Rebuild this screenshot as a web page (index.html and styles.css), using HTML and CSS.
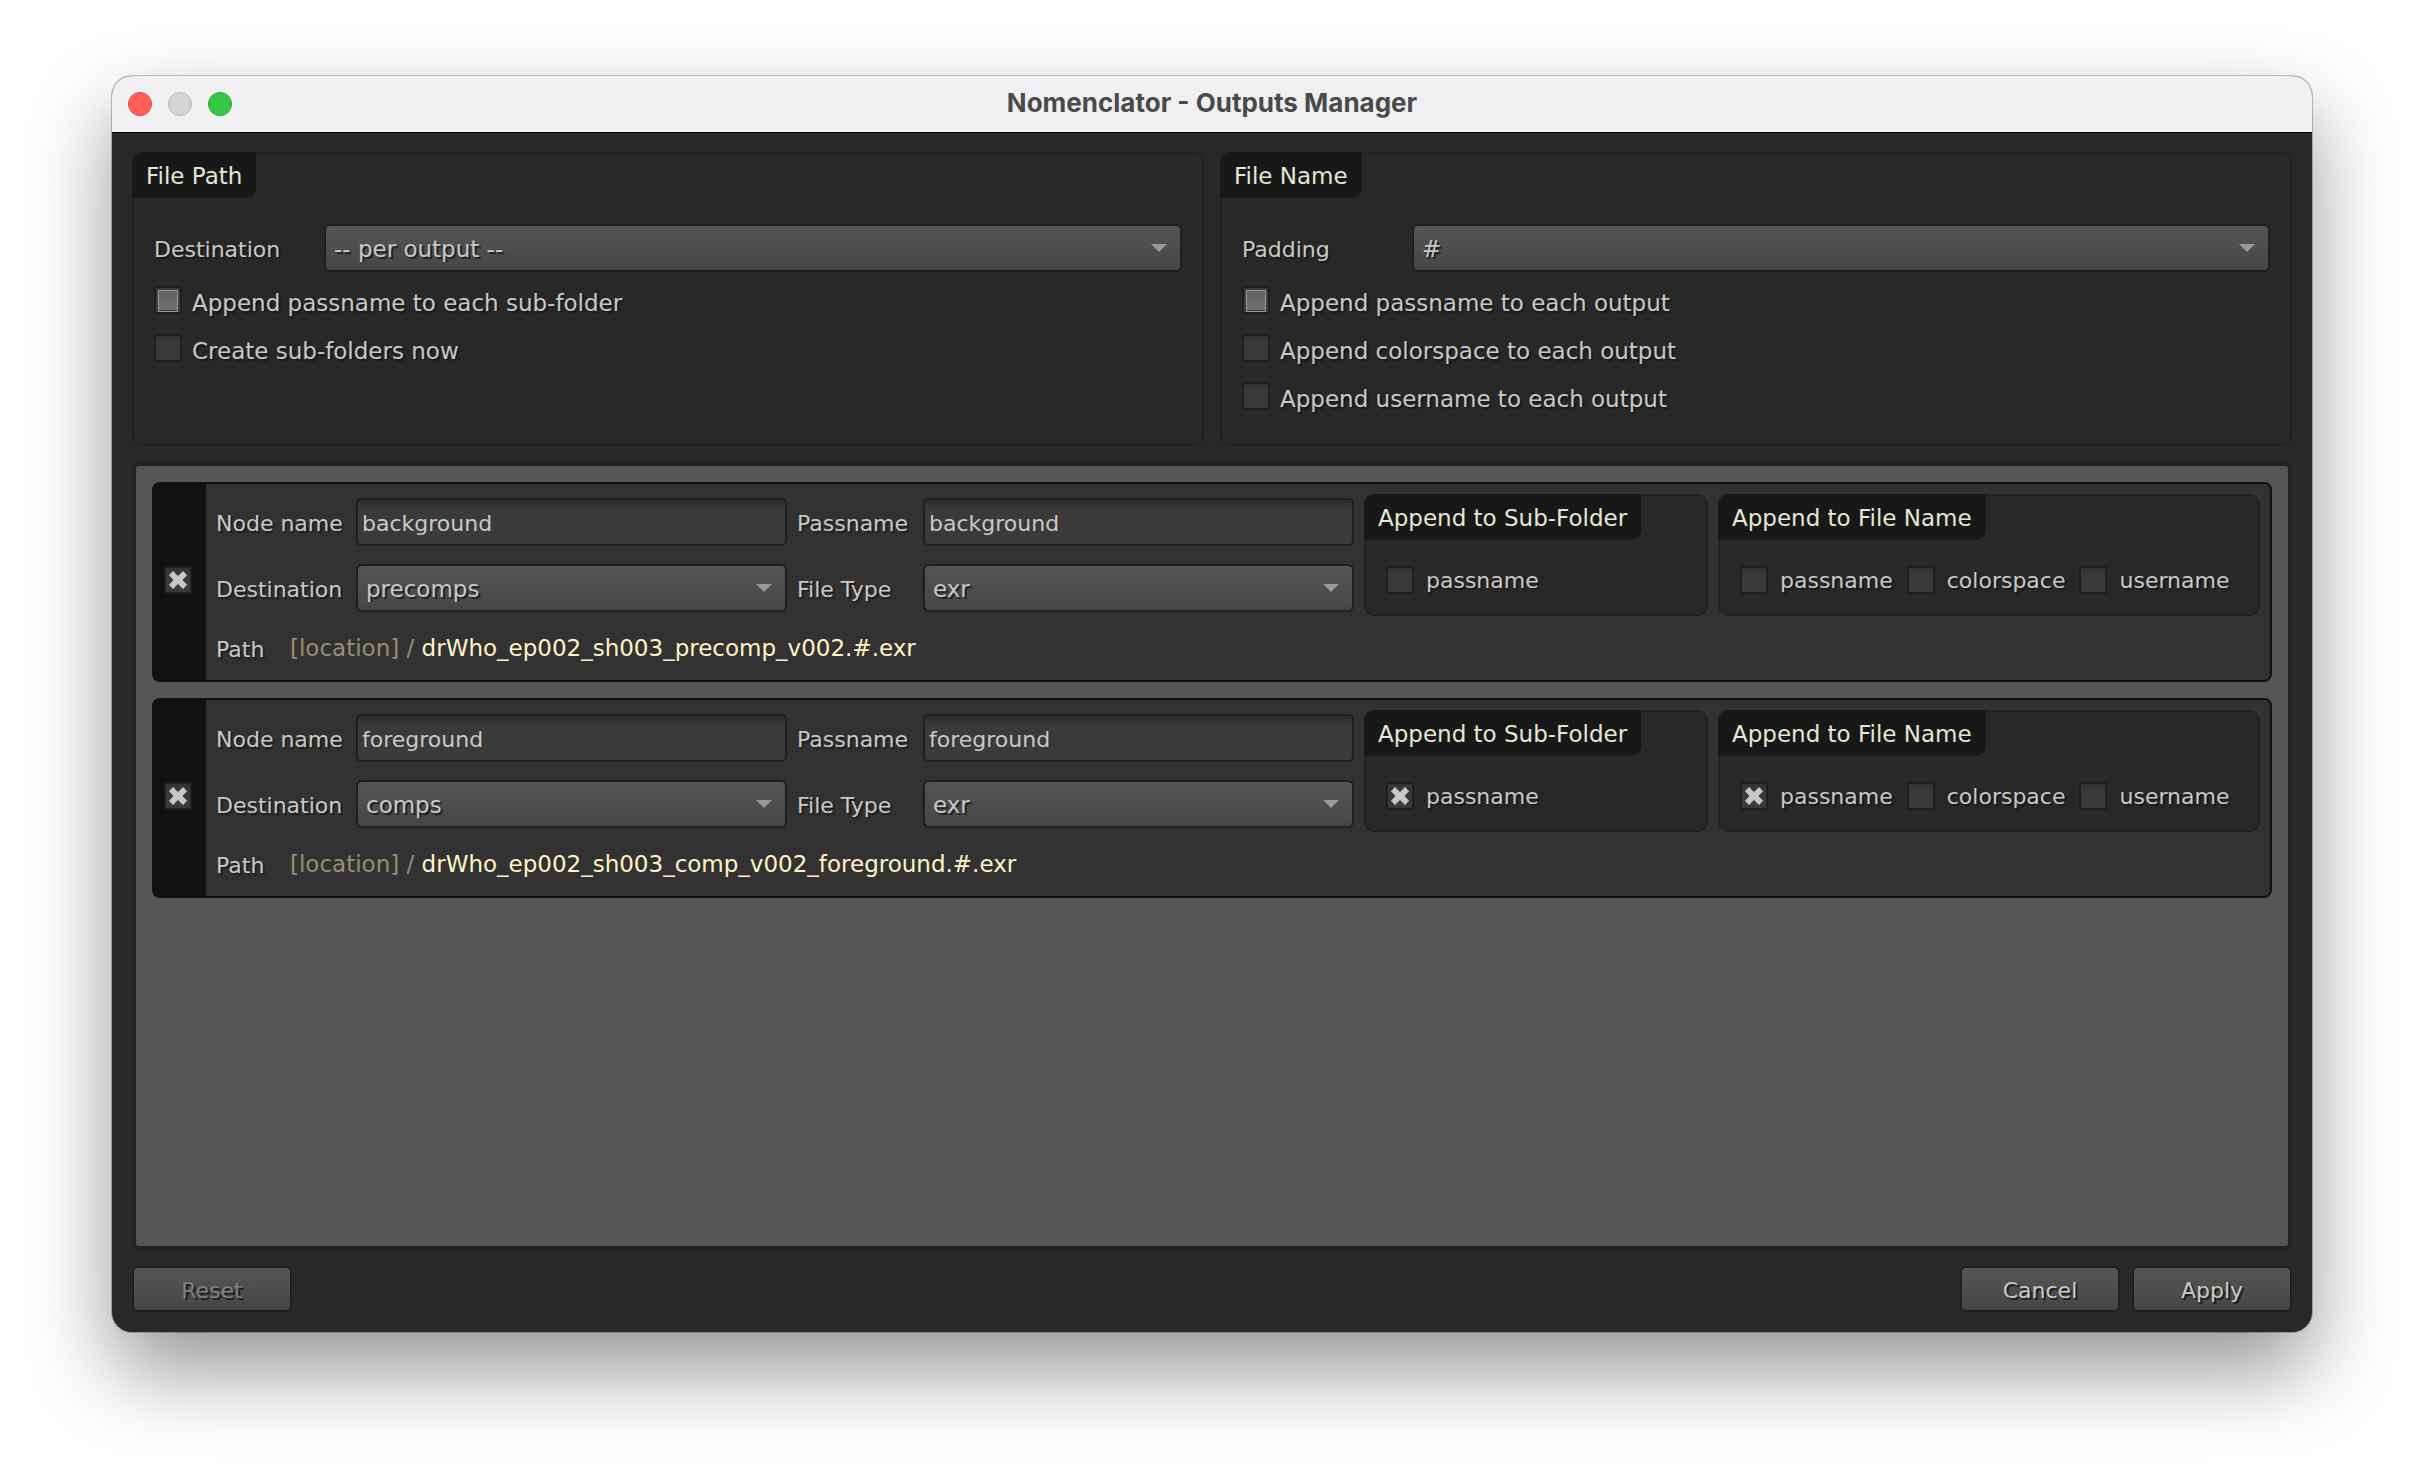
FILE: index.html
```html
<!DOCTYPE html>
<html lang="en">
<head>
<meta charset="utf-8">
<title>Nomenclator - Outputs Manager</title>
<link rel="stylesheet" href="styles.css">
</head>
<body>
<svg class="defs" aria-hidden="true">
  <symbol id="cross" viewBox="0 0 24 24">
    <path d="M7 3.5 L12 8.6 L17 3.5 L20.5 7.2 L15.9 12 L20.5 16.8 L17 20.5 L12 15.4 L7 20.5 L3.5 16.8 L8.1 12 L3.5 7.2 Z"/>
  </symbol>
</svg>
<main class="window">
  <header class="titlebar">
    <div class="lights">
      <button class="light light-close" type="button" aria-label="Close"></button>
      <button class="light light-minimize" type="button" aria-label="Minimize" disabled></button>
      <button class="light light-zoom" type="button" aria-label="Zoom"></button>
    </div>
    <h1 class="title">Nomenclator - Outputs Manager</h1>
  </header>

  <form class="content">
    <div class="settings">
      <section class="group">
        <h2 class="tab">File Path</h2>
        <div class="settings-body">
          <div class="field">
            <label for="destination">Destination</label>
            <div class="select"><select id="destination"><option>-- per output --</option></select></div>
          </div>
          <label class="option"><span class="check"><input type="checkbox" class="partial"></span>Append passname to each sub-folder</label>
          <label class="option"><span class="check"><input type="checkbox"></span>Create sub-folders now</label>
        </div>
      </section>
      <section class="group">
        <h2 class="tab">File Name</h2>
        <div class="settings-body">
          <div class="field">
            <label for="padding">Padding</label>
            <div class="select"><select id="padding"><option>#</option></select></div>
          </div>
          <label class="option"><span class="check"><input type="checkbox" class="partial"></span>Append passname to each output</label>
          <label class="option"><span class="check"><input type="checkbox"></span>Append colorspace to each output</label>
          <label class="option"><span class="check"><input type="checkbox"></span>Append username to each output</label>
        </div>
      </section>
    </div>

    <div class="outputs">
      <article class="card">
        <div class="handle"><span class="check"><input type="checkbox" aria-label="Enable background" checked><svg><use href="#cross"/></svg></span></div>
        <div class="card-body">
          <div class="card-main">
            <div class="fields">
              <label for="node1">Node name</label>
              <input class="text" id="node1" type="text" value="background">
              <label for="pass1">Passname</label>
              <input class="text" id="pass1" type="text" value="background">
              <label for="dest1">Destination</label>
              <div class="select"><select id="dest1"><option>precomps</option></select></div>
              <label for="type1">File Type</label>
              <div class="select"><select id="type1"><option>exr</option></select></div>
            </div>
            <section class="group group-folder">
              <h2 class="tab">Append to Sub-Folder</h2>
              <div class="checks">
                <label class="choice"><span class="check"><input type="checkbox"></span>passname</label>
              </div>
            </section>
            <section class="group group-file">
              <h2 class="tab">Append to File Name</h2>
              <div class="checks">
                <label class="choice"><span class="check"><input type="checkbox"></span>passname</label>
                <label class="choice"><span class="check"><input type="checkbox"></span>colorspace</label>
                <label class="choice"><span class="check"><input type="checkbox"></span>username</label>
              </div>
            </section>
          </div>
          <div class="path">
            <span class="path-label">Path</span>
            <output class="path-value"><span class="location">[location] / </span>drWho_ep002_sh003_precomp_v002.#.exr</output>
          </div>
        </div>
      </article>

      <article class="card">
        <div class="handle"><span class="check"><input type="checkbox" aria-label="Enable foreground" checked><svg><use href="#cross"/></svg></span></div>
        <div class="card-body">
          <div class="card-main">
            <div class="fields">
              <label for="node2">Node name</label>
              <input class="text" id="node2" type="text" value="foreground">
              <label for="pass2">Passname</label>
              <input class="text" id="pass2" type="text" value="foreground">
              <label for="dest2">Destination</label>
              <div class="select"><select id="dest2"><option>comps</option></select></div>
              <label for="type2">File Type</label>
              <div class="select"><select id="type2"><option>exr</option></select></div>
            </div>
            <section class="group group-folder">
              <h2 class="tab">Append to Sub-Folder</h2>
              <div class="checks">
                <label class="choice"><span class="check"><input type="checkbox" checked><svg><use href="#cross"/></svg></span>passname</label>
              </div>
            </section>
            <section class="group group-file">
              <h2 class="tab">Append to File Name</h2>
              <div class="checks">
                <label class="choice"><span class="check"><input type="checkbox" checked><svg><use href="#cross"/></svg></span>passname</label>
                <label class="choice"><span class="check"><input type="checkbox"></span>colorspace</label>
                <label class="choice"><span class="check"><input type="checkbox"></span>username</label>
              </div>
            </section>
          </div>
          <div class="path">
            <span class="path-label">Path</span>
            <output class="path-value"><span class="location">[location] / </span>drWho_ep002_sh003_comp_v002_foreground.#.exr</output>
          </div>
        </div>
      </article>
    </div>

    <footer class="actions">
      <button class="button" type="reset" disabled>Reset</button>
      <button class="button button-cancel" type="button">Cancel</button>
      <button class="button" type="submit">Apply</button>
    </footer>
  </form>
</main>
</body>
</html>
```
FILE: styles.css
```css
* {
  box-sizing: border-box;
}

body {
  margin: 0;
  min-height: 100vh;
  padding: 76px 112px 148px;
  display: flex;
  background: #fff;
  color: #c8c8c8;
  font-family: "DejaVu Sans", Verdana, sans-serif;
  font-size: 22px;
  line-height: 26px;
}

h1, h2 {
  margin: 0;
  font-weight: normal;
}

input, select, button {
  margin: 0;
  font: inherit;
  color: inherit;
}

.defs {
  display: none;
}

.window {
  flex: 1;
  min-width: 0;
  display: flex;
  flex-direction: column;
  border-radius: 20px;
  background: #282828;
  box-shadow: 0 0 0 1px rgba(0, 0, 0, 0.24), 0 38px 84px rgba(0, 0, 0, 0.42);
}

/* Title bar */
.titlebar {
  height: 57px;
  padding: 0 16px;
  display: grid;
  grid-template-columns: 1fr auto 1fr;
  align-items: center;
  background: #f0f0f2;
  border-bottom: 1px solid #000;
  border-radius: 20px 20px 0 0;
}

.lights {
  display: flex;
  gap: 16px;
}

.light {
  width: 24px;
  height: 24px;
  padding: 0;
  border: 1px solid;
  border-radius: 50%;
}

.light-close {
  background: #ff5f57;
  border-color: #e2463f;
}

.light-minimize {
  background: #d6d6d8;
  border-color: #b9b9bb;
}

.light-zoom {
  background: #34c748;
  border-color: #24a936;
}

.title {
  padding-bottom: 2px;
  color: #4a4a4a;
  font-family: Inter, sans-serif;
  font-size: 26px;
  font-weight: 700;
  line-height: 32px;
}

.content {
  flex: 1;
  padding: 19px 20px 20px;
  display: flex;
  flex-direction: column;
  gap: 16px;
}

/* Titled groups */
.group {
  border: 2px solid #222;
  border-radius: 10px;
  background: #282828;
  text-shadow: 2px 2px 1px #1a1a1a;
}

.tab {
  width: max-content;
  height: 46px;
  margin: -2px 0 0 -2px;
  padding: 11px 14px 9px;
  border-radius: 10px 0;
  background: #181818;
  color: #e6e6d2;
  font-size: 23px;
  line-height: 26px;
  white-space: nowrap;
}

.settings {
  display: grid;
  grid-template-columns: 1fr 1fr;
  gap: 16px;
}

.settings-body {
  padding: 26px 20px 22px;
}

.field {
  display: grid;
  grid-template-columns: 170px 1fr;
  align-items: center;
  margin-bottom: 6px;
}

.field label,
.fields label {
  padding-top: 3px;
}

.option {
  height: 48px;
  padding-top: 1px;
  display: flex;
  align-items: center;
  gap: 10px;
  font-size: 23px;
}

.option .check {
  margin-bottom: 5px;
}

/* Controls */
.select {
  display: grid;
  align-items: center;
}

.select select,
.select::after {
  grid-area: 1 / 1;
}

.select select {
  width: 100%;
  height: 48px;
  padding: 2px 40px 0 8px;
  appearance: none;
  border: 2px solid #1f1f1f;
  border-radius: 6px;
  background: linear-gradient(#555, #464646);
  font-size: 23px;
  text-shadow: 2px 2px 1px #1f1f1f;
}

.select::after {
  content: "";
  width: 16px;
  height: 8px;
  margin-right: 15px;
  justify-self: end;
  background: #999;
  clip-path: polygon(0 0, 100% 0, 50% 100%);
  pointer-events: none;
}

.text {
  width: 100%;
  height: 48px;
  padding: 3px 4px 0;
  border: 2px solid #1f1f1f;
  border-radius: 5px;
  background: linear-gradient(#2c2c2c, #3a3a3a 8px);
}

.check {
  width: 28px;
  height: 28px;
  flex: none;
  display: grid;
}

.check input,
.check svg {
  grid-area: 1 / 1;
  width: 28px;
  height: 28px;
}

.check input {
  appearance: none;
  border: 2px solid #1f1f1f;
  border-radius: 2px;
  background: linear-gradient(#333, #3a3a3a 8px);
}

.check svg {
  padding: 2px;
  fill: #c8c8c8;
  stroke: #c8c8c8;
  stroke-width: 1;
  stroke-linejoin: round;
  pointer-events: none;
}

.check .partial {
  padding: 2px;
  background: linear-gradient(#606060, #707070) content-box, #3a3a3a;
}

.check .partial::before {
  content: "";
  display: block;
  height: 100%;
  border: 1px solid #999;
}

/* Output list */
.outputs {
  flex: 1;
  padding: 16px;
  display: flex;
  flex-direction: column;
  gap: 16px;
  border: 4px solid #222;
  border-radius: 6px;
  background: #555;
}

.card {
  display: flex;
  border: 2px solid #111;
  border-radius: 8px;
  background: #323232;
}

.handle {
  width: 52px;
  padding-right: 4px;
  flex: none;
  display: grid;
  place-items: center;
  background: #111;
}

.handle .check {
  margin-bottom: 4px;
}

.card-body {
  flex: 1;
  min-width: 0;
  padding: 10px;
}

.card-main {
  display: flex;
  gap: 10px;
}

.fields {
  flex: 1;
  padding-top: 4px;
  display: grid;
  grid-template-columns: 140px 1fr 136px 1fr;
  align-items: center;
  align-content: start;
  row-gap: 18px;
  text-shadow: 2px 2px 1px #1f1f1f;
}

.fields > label:nth-of-type(even) {
  padding-left: 10px;
}

.fields .text {
  text-shadow: none;
}

.group-folder {
  width: 344px;
}

.group-file {
  width: 542px;
}

.checks {
  height: 74px;
  padding: 26px 20px 0;
  display: flex;
  align-items: flex-start;
  gap: 14px;
}

.choice {
  display: flex;
  align-items: center;
  gap: 12px;
}

.choice .check {
  margin-bottom: 2px;
}

.path {
  height: 44px;
  margin-top: 10px;
  display: grid;
  grid-template-columns: 66px 1fr;
  align-items: center;
}

.path-label {
  padding-top: 3px;
  text-shadow: 2px 2px 1px #1f1f1f;
}

.path-value {
  padding: 0 8px;
  color: #fff4c8;
  font-size: 23px;
}

.location {
  color: #958f73;
}

/* Footer */
.actions {
  display: flex;
  gap: 12px;
}

.button {
  width: 160px;
  height: 46px;
  padding: 3px 0 0;
  border: 2px solid #1f1f1f;
  border-radius: 6px;
  background: linear-gradient(#555, #464646);
  text-shadow: 2px 2px 1px #1a1a1a;
}

.button:disabled {
  color: #808080;
}

.button-cancel {
  margin-left: auto;
}
```
